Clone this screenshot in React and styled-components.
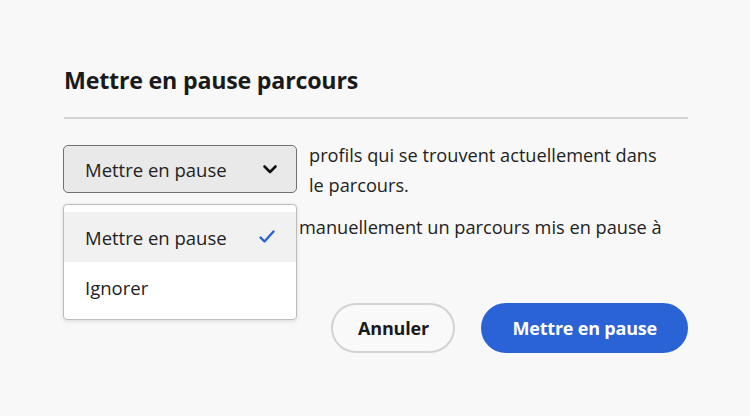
import React from "react";
import styled, { createGlobalStyle } from "styled-components";

const Global = createGlobalStyle`
  html, body { margin: 0; padding: 0; background: #f8f8f8; }
  body { font-family: "Open Sans", "Noto Sans", sans-serif; -webkit-font-smoothing: antialiased; }
  * { box-sizing: border-box; }
`;

const Dialog = styled.div`
  width: 750px;
  height: 416px;
  background: #f8f8f8;
  border-radius: 4px;
  padding: 62px 62px 0 64px;
  display: flex;
  flex-direction: column;
  color: #222;
`;

const Title = styled.h2`
  margin: 0;
  font-size: 23.2px;
  line-height: 36px;
  font-weight: 700;
  color: #1a1a1a;
  letter-spacing: -0.2px;
`;

const Divider = styled.div`
  height: 2px;
  background: #d4d4d4;
  margin-top: 19px;
`;

const Content = styled.div`
  display: grid;
  grid-template-columns: 245px 1fr;
  margin-top: 21px;
  row-gap: 12px;
`;

const PickerWrap = styled.div`
  position: relative;
  padding-top: 5px;
`;

const Picker = styled.button`
  width: 234px;
  height: 48px;
  margin-left: -1px;
  display: flex;
  align-items: center;
  justify-content: space-between;
  padding: 0 18px 0 21px;
  background: #e9e9e9;
  border: 1px solid #707070;
  border-radius: 5px;
  font-family: inherit;
  font-size: 18.5px;
  color: #222;
`;

const Text = styled.p`
  margin: 0;
  font-size: 18.2px;
  line-height: 30px;
  color: #222;
  white-space: nowrap;
`;

const IndentText = styled(Text)`
  grid-column: 2;
  margin-left: -10px;
`;

const Popover = styled.div`
  position: absolute;
  top: 64px;
  left: -1px;
  width: 234px;
  padding: 7px 0;
  background: #ffffff;
  border: 1px solid #bdbdbd;
  border-radius: 4px;
  box-shadow: 0 1px 4px rgba(0, 0, 0, 0.12);
  z-index: 2;
`;

const Option = styled.div`
  height: 50px;
  display: flex;
  align-items: center;
  justify-content: space-between;
  padding: 0 20px 0 21px;
  background: ${(p) => (p.$active ? "#f1f1f1" : "transparent")};
  font-size: 18.5px;
  color: #222;
`;

const Footer = styled.div`
  display: flex;
  justify-content: flex-end;
  gap: 26px;
  margin-top: 61px;
`;

const Button = styled.button`
  height: 50px;
  border-radius: 25px;
  font-family: inherit;
  font-weight: 700;
  font-size: 18px;
  letter-spacing: -0.2px;
  padding: 0 ${(p) => (p.$primary ? "29px" : "20px")};
  min-width: ${(p) => (p.$primary ? "206px" : "124px")};
  background: ${(p) => (p.$primary ? "#2a63d6" : "#f9f9f9")};
  color: ${(p) => (p.$primary ? "#ffffff" : "#1a1a1a")};
  border: 2px solid ${(p) => (p.$primary ? "#2a63d6" : "#d2d2d2")};
`;

const Chevron = () => (
  <svg width="16" height="12" viewBox="0 0 16 12" fill="none">
    <path d="M2.5 3.5 L8 9 L13.5 3.5" stroke="#111" strokeWidth="2.6" strokeLinecap="round" strokeLinejoin="round" />
  </svg>
);

const Check = () => (
  <svg width="18" height="16" viewBox="0 0 18 16" fill="none">
    <path d="M2.5 8.5 L6.5 12.5 L15.5 2.5" stroke="#2a63d6" strokeWidth="2.4" strokeLinecap="round" strokeLinejoin="round" />
  </svg>
);

export default function App() {
  return (
    <>
      <Global />
      <Dialog>
        <Title>Mettre en pause parcours</Title>
        <Divider />
        <Content>
          <PickerWrap>
            <Picker>
              <span>Mettre en pause</span>
              <Chevron />
            </Picker>
            <Popover>
              <Option $active>
                <span>Mettre en pause</span>
                <Check />
              </Option>
              <Option>
                <span>Ignorer</span>
              </Option>
            </Popover>
          </PickerWrap>
          <Text>
            profils qui se trouvent actuellement dans
            <br />
            le parcours.
          </Text>
          <IndentText>manuellement un parcours mis en pause à</IndentText>
        </Content>
        <Footer>
          <Button>Annuler</Button>
          <Button $primary>Mettre en pause</Button>
        </Footer>
      </Dialog>
    </>
  );
}
